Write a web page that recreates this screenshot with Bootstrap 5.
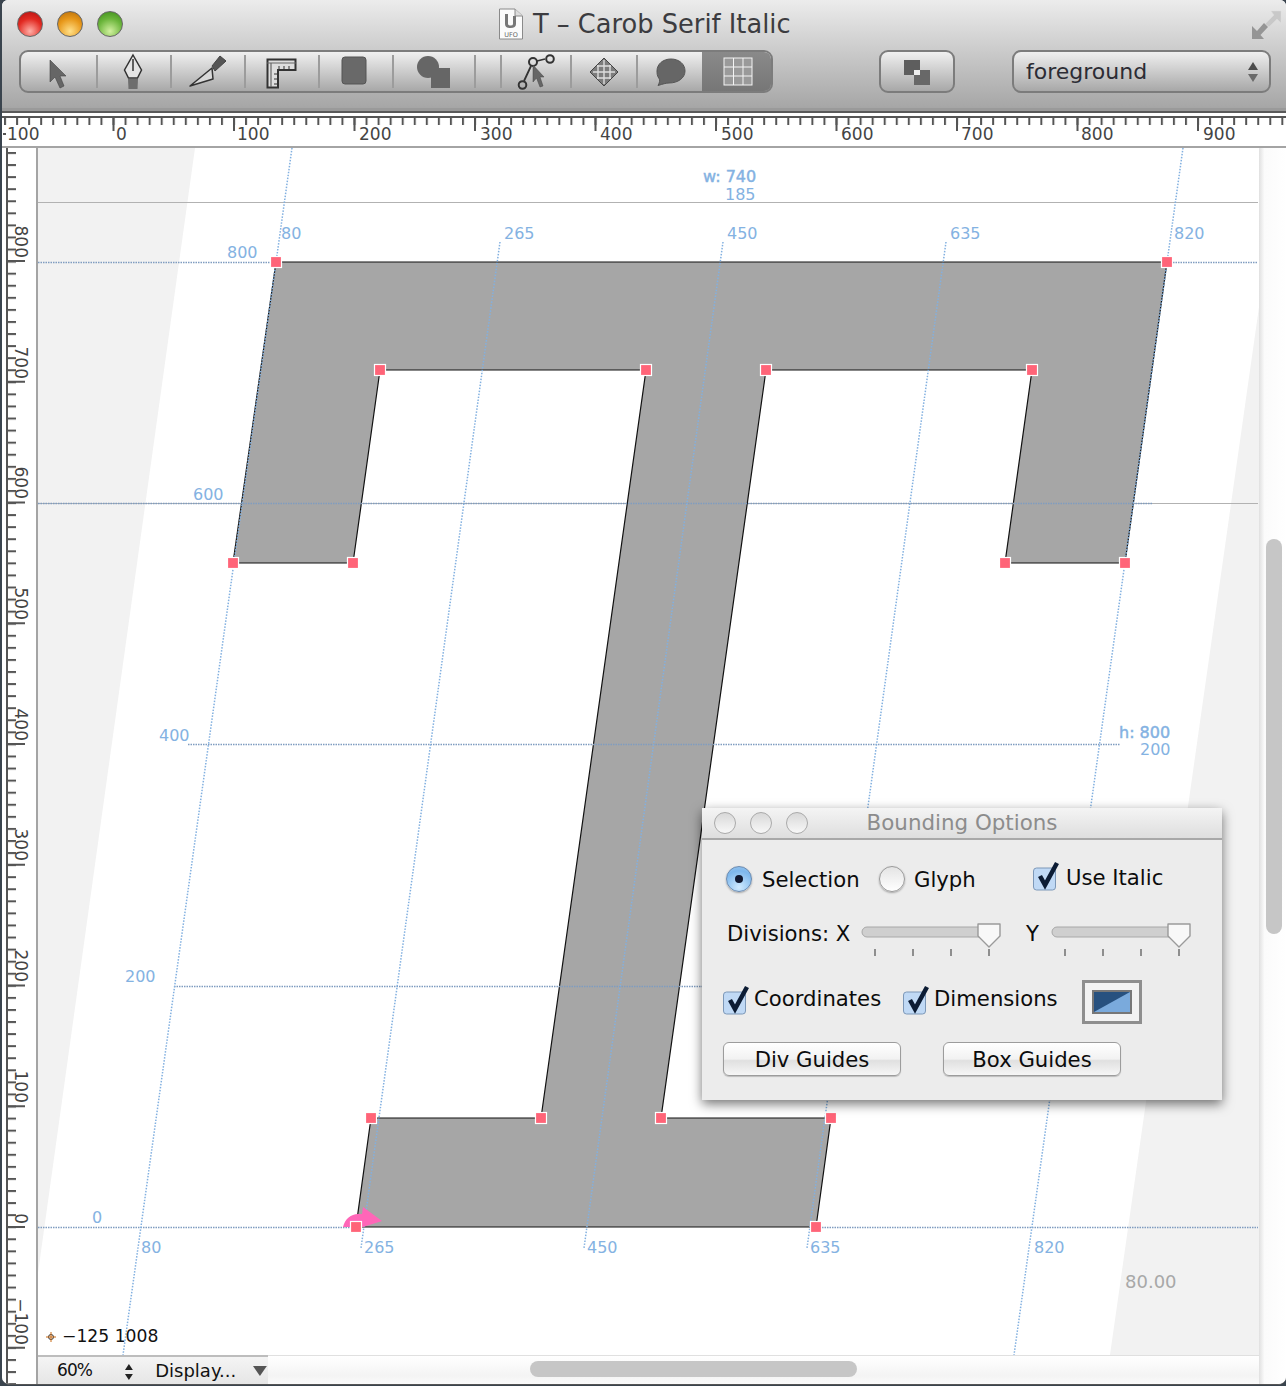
<!doctype html>
<html lang="en">
<head>
<meta charset="utf-8">
<title>T - Carob Serif Italic</title>
<link href="https://cdn.jsdelivr.net/npm/bootstrap@5.3.0/dist/css/bootstrap.min.css" rel="stylesheet">
<style>
html,body{margin:0;height:1386px;overflow:hidden;background:#3a444e;font-family:"DejaVu Sans",sans-serif}
.win{width:1284px;height:1385px;margin-left:2px;background:#fff;border-radius:6px 6px 8px 8px;overflow:hidden;border-bottom:1px solid #555;position:relative}
.chrome{height:113px;background:linear-gradient(#ececec,#a4a4a4);border-bottom:2px solid #5a5a5a;box-shadow:inset 0 -3px 0 #9a9a9a}
.titlerow{height:50px;position:relative}
.lights{left:15px;top:11px;gap:14px;position:absolute}
.light{width:26px;height:26px;border-radius:50%;border:1px solid #666}
.l-r{background:radial-gradient(circle at 50% 80%,#ffb0a8,#e22a22 55%,#b01010)}
.l-y{background:radial-gradient(circle at 50% 80%,#ffe08a,#e8981a 55%,#b46a08)}
.l-g{background:radial-gradient(circle at 50% 80%,#d2f0a0,#6cb63c 55%,#3a8a18)}
.wtitle{position:absolute;left:531px;top:7px;font-size:25.7px;line-height:34px;color:#3c3c40;white-space:nowrap}
.docicon{position:absolute;left:496px;top:8px}
.expandicon{position:absolute;left:1248px;top:10px}
.toolrow{padding-left:17px;gap:0;height:43px;align-items:stretch}
.seg{width:754px;height:43px;border:2px solid #7c7c7c;border-radius:9px;background:linear-gradient(#f0f0f0,#a8a8a8);overflow:hidden;align-items:center}
.seg .btn{padding:0;border:0;border-radius:0;height:39px;display:block;line-height:0;background:transparent;flex:none}
.seg .btn.active{background:linear-gradient(#8a8a8a,#767676)}
.tsep{display:block;width:2px;height:33px;background:#9c9c9c;flex:none}
.t75{width:75px}.t72{width:72px}.t80{width:80px}.t24{width:24px}.t68{width:68px}.t64{width:64px}.t69{width:69px}
.minibtn{margin-left:106px;width:76px;height:43px;padding:0;border:2px solid #7c7c7c;border-radius:9px;background:linear-gradient(#f0f0f0,#a8a8a8);line-height:0}
.layersel{margin-left:57px;width:259px;height:43px;border:2px solid #7c7c7c;border-radius:9px;background:linear-gradient(#efefef,#a8a8a8);padding:0 10px 0 12px;font-size:22px;color:#2c2c34;align-items:center;justify-content:space-between}
.hruler{height:35px;background:#fff;border-bottom:2px solid #a4a4a4;line-height:0}
.mainrow{height:1236px}
.vruler{width:36px;background:#fff;border-right:2px solid #a4a4a4;flex:none;line-height:0}
.canvascol{width:1221px;flex:none;position:relative;background:#fff}
.gsvg{display:block}
.rtxt{font-family:"DejaVu Sans",sans-serif;font-size:17px;fill:#444}
.gl{font-family:"DejaVu Sans",sans-serif;font-size:16px;fill:#84b2e2}
.gb{stroke:#84b2e2;stroke-width:.45}
.guide{stroke:#82b0e0;stroke-width:1.5;stroke-dasharray:1.5 1.5;fill:none}
.gh{stroke:#7f9cc0;stroke-width:1.5;stroke-dasharray:1.5 1;fill:none}
.metric{stroke:#b2b2b2;stroke-width:1.2}
.pt{fill:#ff6478;stroke:#fff;stroke-width:1.2}
.statusbar{height:29px;background:linear-gradient(#fff,#f4f4f4 70%,#fafafa);border-top:1px solid #e0e0e0;position:relative}
.statusleft{width:230px;background:linear-gradient(#f4f4f4,#e6e6e6);border-top:2px solid #bdbdbd;margin-top:-1px;font-size:18px;color:#111;align-items:center;position:relative}
.zoomv{margin-left:19px;width:60px;font-size:17px;letter-spacing:-.9px}
.dispv{margin-left:12px}
.stepper{width:24px;margin-left:3px}
.hthumb{position:absolute;left:492px;top:5px;width:327px;height:16px;background:#c6c6c6;border-radius:8px}
.scrollcol{width:27px;flex:none;background:linear-gradient(90deg,#e0e0e0,#fbfbfb 20%,#fff);position:relative}
.vthumb{position:absolute;left:7px;top:391px;width:16px;height:395px;background:#c6c6c6;border-radius:8px}
.boundpanel{position:absolute;left:664px;top:660px;width:520px;height:292px;background:#ececec;box-shadow:0 4px 12px rgba(0,0,0,.55);border-radius:3px 3px 0 0;font-size:21.2px;color:#0c0c0c}
.ptitle{height:32px;background:linear-gradient(#f4f4f4,#dedede);border-bottom:2px solid #a8a8a8;position:relative;text-align:center;font-size:21.4px;line-height:30px;color:#8c8c8c}
.pdots{position:absolute;left:12px;top:4px;gap:14px}
.pdot{width:22px;height:22px;border-radius:50%;border:1px solid #aaa;background:linear-gradient(#d8d8d8,#f8f8f8)}
.prow{white-space:nowrap}
.r1{height:30px;margin-top:24px;padding-left:24px;align-items:center}
.r2{height:38px;margin-top:28px;padding-left:25px;align-items:flex-start}
.r3{height:44px;margin-top:20px;padding-left:21px;align-items:center}
.r4{margin-top:18px;padding-left:21px;gap:42px}
.rad{width:26px;height:26px;border-radius:50%;border:1px solid #9a9a9a;background:linear-gradient(#e4e4e4,#fff);box-shadow:0 1px 2px rgba(0,0,0,.3);flex:none;position:relative}
.rad.on{background:radial-gradient(circle at 50% 85%,#cfeaff,#7db7ec 70%,#9cc6ee);border-color:#6a8ab0}
.rad.on::after{content:"";position:absolute;left:8px;top:8px;width:8px;height:8px;border-radius:50%;background:#101830}
.rl-sel{margin-left:10px;width:117px;padding-top:1px}
.rl-gly{margin-left:9px;width:119px;padding-top:1px}
.rl-ita{margin-left:7px;margin-top:-3px}
.cbx{width:26px;height:30px;flex:none;overflow:visible}
.cbx-up{margin-top:-6px}
.cbx-r3{margin-top:-4px}
.rl-coo{margin-left:5px;width:149px;margin-top:-6px}
.rl-dim{margin-left:5px;width:148px;margin-top:-6px}
.dl-x{width:134px;line-height:24px}
.dl-y{margin-left:25px;width:25px;line-height:24px}
.pbtn{width:178px;height:34px;padding:1px 0 0;font-size:21.2px;line-height:30px;color:#0c0c0c;border:1px solid #9c9c9c;border-radius:6px;background:linear-gradient(#fff,#f2f2f2 50%,#e0e0e0 55%,#f6f6f6);box-shadow:0 1px 1px rgba(0,0,0,.2)}
.swatch{width:60px;height:44px;border:3px solid #8e8e8e;background:#f2f2f2;line-height:0;display:flex;align-items:center;justify-content:center;flex:none}
</style>
</head>
<body>
<div class="win">
  <header class="chrome">
    <div class="titlerow">
      <div class="lights d-flex"><span class="light l-r"></span><span class="light l-y"></span><span class="light l-g"></span></div>
      <svg class="docicon" width="26" height="32" viewBox="0 0 26 32"><path d="M1.500 1H17L24.500 8V31H1.500Z" fill="#fbfbfb" stroke="#8a8a8a"/><path d="M17 1V8H24.500" fill="#ddd" stroke="#8a8a8a"/><path d="M7 6V16Q7 20 12.500 20T18 16V8H15V16Q15 17.500 12.500 17.500T10 16V6Z" fill="#777"/><text x="13" y="28.500" font-size="6.500" text-anchor="middle" fill="#666" font-family="DejaVu Sans">UFO</text></svg>
      <div class="wtitle">T – Carob Serif Italic</div>
      <svg class="expandicon" width="32" height="30" viewBox="0 0 32 30"><path d="M31 1H21L24 5L15 14L19 17L27 9L31 13Z" fill="#c8c8c8" stroke="#ddd" stroke-width=".5"/><path d="M2 29H14L10.500 25L18 17L14 13L7 21L2 16Z" fill="#959595"/></svg>
    </div>
    <div class="toolrow d-flex">
      <div class="seg d-flex">
        <button type="button" class="btn t75" aria-label="Pointer"><svg width="75" height="39" viewBox="21 52 75 39"><path d="M50 60V82L55 77L60 88L64 86L60 76L66 76Z" fill="#666" stroke="#444" stroke-width=".6"/></svg></button><i class="tsep"></i>
        <button type="button" class="btn t72" aria-label="Pen"><svg width="72" height="39" viewBox="98 52 72 39"><path d="M133 55L141.500 70L137.500 78H128.500L124.500 70Z" fill="#e4e4e4" stroke="#333" stroke-width="1.500"/><path d="M133 59V71" stroke="#333" stroke-width="1.500"/><path d="M128 79H138L137.500 89H128.500Z" fill="#6e6e6e"/></svg></button><i class="tsep"></i>
        <button type="button" class="btn t72" aria-label="Knife"><svg width="72" height="39" viewBox="172 52 72 39"><path d="M190 86L212 68L213 79Z" fill="#d8d8d8" stroke="#333" stroke-width="1.500" stroke-linejoin="round"/><path d="M212 66L220 56L226 61L215 71Z" fill="#555" stroke="#444"/></svg></button><i class="tsep"></i>
        <button type="button" class="btn t72" aria-label="Measure"><svg width="72" height="39" viewBox="246 52 72 39"><path d="M267.500 59.500H295.500V70H278V87.500H267.500Z" fill="#dedede" stroke="#333" stroke-width="2"/><path d="M267 63H296M271 63V87" stroke="#666" stroke-width="1.200"/><path d="M279 66V70M284 66V70M289 66V70M274 74H278M274 79H278M274 84H278" stroke="#333"/></svg></button><i class="tsep"></i>
        <button type="button" class="btn t72" aria-label="Rectangle"><svg width="72" height="39" viewBox="320 52 72 39"><rect x="342" y="57" width="24" height="27" rx="3" fill="#696969" stroke="#555"/></svg></button><i class="tsep"></i>
        <button type="button" class="btn t80" aria-label="Shapes"><svg width="80" height="39" viewBox="394 52 80 39"><circle cx="428" cy="67" r="11" fill="#666"/><rect x="431" y="68" width="19" height="20" fill="#666"/></svg></button><i class="tsep"></i>
        <button type="button" class="btn t24" aria-label="Blank"></button><i class="tsep"></i>
        <button type="button" class="btn t68" aria-label="Nodes"><svg width="68" height="39" viewBox="502 52 68 39"><path d="M537 61L545 59M531 66L524 81" stroke="#333" stroke-width="1.800"/><g fill="none" stroke="#333" stroke-width="2"><circle cx="533" cy="62" r="4"/><circle cx="550" cy="59" r="3.800"/><circle cx="522.500" cy="85" r="3.800"/></g><path d="M533 65V82L536.500 78L540 87L543 86L540 77L544 77Z" fill="#666" stroke="#444" stroke-width=".5"/></svg></button><i class="tsep"></i>
        <button type="button" class="btn t64" aria-label="Transform"><svg width="64" height="39" viewBox="572 52 64 39"><path d="M604 58L618 72L604 86L590 72Z" fill="#7c7c7c" stroke="#444"/><path d="M597 66H611M593 72H615M597 78H611M598 65V79M604 60V84M610 65V79" stroke="#ddd" stroke-width="1.400"/></svg></button><i class="tsep"></i>
        <button type="button" class="btn t64" aria-label="Comment"><svg width="64" height="39" viewBox="638 52 64 39"><path d="M671 59C679 59 685 64 685 71C685 78 678 83 669 83C666 83 663 84 658 85.500C660 82 660 80 659 78.500C657 76 657 73 657 71C657 64 663 59 671 59Z" fill="#666" stroke="#555"/></svg></button>
        <button type="button" class="btn active t69" aria-label="Grid"><svg width="69" height="39" viewBox="702 52 69 39"><rect x="724" y="58" width="28" height="27" fill="#9a9a9a" stroke="#f4f4f4"/><path d="M733.500 58V85M743 58V85M724 67H752M724 76H752" stroke="#f4f4f4"/></svg></button>
      </div>
      <button type="button" class="minibtn btn" aria-label="Layers"><svg width="72" height="39" viewBox="881 52 72 39"><rect x="904" y="60" width="16" height="15" fill="#5e5e5e"/><rect x="914" y="70" width="16" height="15" fill="#686868"/><rect x="914" y="70" width="6" height="5" fill="#eee"/></svg></button>
      <div class="layersel d-flex"><span>foreground</span><svg width="12" height="24" viewBox="0 0 12 24"><path d="M6 2L11 10H1Z" fill="#4c4c4c"/><path d="M6 22L1 14H11Z" fill="#6a6a6a"/></svg></div>
    </div>
  </header>

  <div class="hruler">
    <svg width="1284" height="33" viewBox="2 113 1284 33">
      <defs><pattern id="tickh" patternUnits="userSpaceOnUse" x="112.500" y="113" width="12.050" height="33"><rect x="0" y="3" width="2" height="12" fill="#555"/></pattern></defs>
      <rect x="2" y="116" width="1284" height="9" fill="url(#tickh)"/>
      <rect x="2" y="116" width="1284" height="2" fill="#555"/>
      <path d="M113.500 118V131M234 118V131M354.500 118V131M475 118V131M595.500 118V131M716 118V131M836.500 118V131M957 118V131M1077.500 118V131M1198 118V131M3 134H6" stroke="#555" stroke-width="2"/>
      <g class="rtxt"><text x="7" y="140">100</text><text x="116" y="140">0</text><text x="237" y="140">100</text><text x="359" y="140">200</text><text x="480" y="140">300</text><text x="600" y="140">400</text><text x="721" y="140">500</text><text x="841" y="140">600</text><text x="961" y="140">700</text><text x="1081" y="140">800</text><text x="1203" y="140">900</text></g>
    </svg>
  </div>

  <div class="mainrow d-flex">
    <div class="vruler">
      <svg width="34" height="1236" viewBox="2 148 34 1236">
        <defs><pattern id="tickv" patternUnits="userSpaceOnUse" x="0" y="152" width="36" height="12.070"><rect x="6" y="0" width="10" height="2" fill="#555"/></pattern></defs>
        <rect x="2" y="148" width="34" height="1236" fill="url(#tickv)"/>
        <rect x="6" y="148" width="2" height="1236" fill="#555"/>
        <path d="M8 261H25M8 381.800H25M8 502.500H25M8 623.300H25M8 744H25M8 864.800H25M8 985.500H25M8 1106.300H25M8 1227H25M8 1347.800H25" stroke="#555" stroke-width="2"/>
        <g class="rtxt"><text transform="translate(15 258) rotate(90)" text-anchor="end">800</text><text transform="translate(15 379) rotate(90)" text-anchor="end">700</text><text transform="translate(15 499) rotate(90)" text-anchor="end">600</text><text transform="translate(15 620) rotate(90)" text-anchor="end">500</text><text transform="translate(15 741) rotate(90)" text-anchor="end">400</text><text transform="translate(15 861) rotate(90)" text-anchor="end">300</text><text transform="translate(15 982) rotate(90)" text-anchor="end">200</text><text transform="translate(15 1103) rotate(90)" text-anchor="end">100</text><text transform="translate(15 1224) rotate(90)" text-anchor="end">0</text><text transform="translate(15 1345) rotate(90)" text-anchor="end">−100</text></g>
      </svg>
    </div>
    <div class="canvascol">
      <svg class="gsvg" width="1221" height="1207" viewBox="38 148 1221 1207">
        <rect x="38" y="148" width="1221" height="1207" fill="#fff"/>
        <path d="M38 148H195L38 1273Z" fill="#f2f2f2"/>
        <path d="M1260 300V1355H1110Z" fill="#f2f2f2"/>
        <path class="metric" d="M38 202.500H1258M38 503.500H1258"/>
        <path d="M276 262H1167L1125 563H1005L1032 370H766L661 1118H831L816 1227H356L371 1118H541L646 370H380L353 563H233Z" fill="#a6a6a6" stroke="#111" stroke-width="1.200"/>
        <path class="gh" d="M38 262.500H270M1173 262.500H1258M38 503.500H1153M188 744.500H1120M174 986.500H702M38 1227.500H350M822 1227.500H1258"/>
        <path class="guide" d="M292 148L123 1355M500 242L361 1248M723 242L584 1248M946 242L807 1248M1183 148L1014 1355"/>
        <path d="M343 1227C345 1219 351 1214 358 1214H362L363 1207L382 1221L363 1227Z" fill="#ff66b8"/>
        <g>
          <rect class="pt" x="270.500" y="256.500" width="11" height="11"/><rect class="pt" x="1161.500" y="256.500" width="11" height="11"/><rect class="pt" x="1119.500" y="557.500" width="11" height="11"/><rect class="pt" x="999.500" y="557.500" width="11" height="11"/><rect class="pt" x="1026.500" y="364.500" width="11" height="11"/><rect class="pt" x="760.500" y="364.500" width="11" height="11"/><rect class="pt" x="655.500" y="1112.500" width="11" height="11"/><rect class="pt" x="825.500" y="1112.500" width="11" height="11"/><rect class="pt" x="810.500" y="1221.500" width="11" height="11"/><rect class="pt" x="350.500" y="1221.500" width="11" height="11"/><rect class="pt" x="365.500" y="1112.500" width="11" height="11"/><rect class="pt" x="535.500" y="1112.500" width="11" height="11"/><rect class="pt" x="640.500" y="364.500" width="11" height="11"/><rect class="pt" x="374.500" y="364.500" width="11" height="11"/><rect class="pt" x="347.500" y="557.500" width="11" height="11"/><rect class="pt" x="227.500" y="557.500" width="11" height="11"/>
        </g>
        <g class="gl">
          <text class="gb" x="703" y="182">w: 740</text><text x="725" y="200">185</text>
          <text x="281" y="239">80</text><text x="504" y="239">265</text><text x="727" y="239">450</text><text x="950" y="239">635</text><text x="1174" y="239">820</text>
          <text x="227" y="258">800</text><text x="193" y="500">600</text><text x="159" y="741">400</text><text x="125" y="982">200</text><text x="92" y="1223">0</text>
          <text class="gb" x="1119" y="738">h: 800</text><text x="1140" y="755">200</text>
          <text x="141" y="1253">80</text><text x="364" y="1253">265</text><text x="587" y="1253">450</text><text x="810" y="1253">635</text><text x="1034" y="1253">820</text>
        </g>
        <text x="1125" y="1288" font-family="DejaVu Sans" font-size="18" fill="#a8a8a8">80.00</text>
        <g fill="none" stroke="#c86a14"><circle cx="51" cy="1337" r="2.500" stroke="#333"/><path d="M51 1332V1342M46 1337H56"/></g>
        <text x="62" y="1342" font-family="DejaVu Sans" font-size="17.200" fill="#111">−125 1008</text>
      </svg>
      <div class="statusbar d-flex">
        <div class="statusleft d-flex">
          <span class="zoomv">60%</span>
          <svg class="stepper" width="24" height="22" viewBox="0 0 24 22"><path d="M10 4L14 10H6Z" fill="#222"/><path d="M10 20L6 14H14Z" fill="#222"/></svg>
          <span class="dispv">Display...</span>
          <svg class="ms-3" width="16" height="12" viewBox="0 0 16 12"><path d="M1 1H15L8 11Z" fill="#555"/></svg>
        </div>
        <div class="hthumb"></div>
      </div>

      <section class="boundpanel">
        <div class="ptitle">Bounding Options<div class="pdots d-flex"><span class="pdot"></span><span class="pdot"></span><span class="pdot"></span></div></div>
        <div class="prow r1 d-flex">
          <span class="rad on"></span><span class="rl-sel">Selection</span>
          <span class="rad"></span><span class="rl-gly">Glyph</span>
          <svg class="cbx cbx-up" viewBox="0 0 26 30"><rect x=".5" y="7" width="22" height="22" rx="3" fill="#c0d9f5" stroke="#7d98b8"/><path d="M7 15L12 24L24 2" fill="none" stroke="#0c1c34" stroke-width="4.500"/></svg><span class="rl-ita">Use Italic</span>
        </div>
        <div class="prow r2 d-flex">
          <span class="dl-x">Divisions: X</span>
          <svg width="140" height="38" viewBox="0 0 140 38"><rect x="1" y="5" width="130" height="10" rx="5" fill="#cfcfcf" stroke="#a8a8a8"/><path d="M14 27V34M52 27V34M90 27V34M128 27V34" stroke="#777" stroke-width="1.600"/><path d="M117 2H139V14L128 25L117 14Z" fill="#f8f8f8" stroke="#9a9a9a" stroke-width="1.400" stroke-linejoin="round"/></svg>
          <span class="dl-y">Y</span>
          <svg width="140" height="38" viewBox="0 0 140 38"><rect x="1" y="5" width="130" height="10" rx="5" fill="#cfcfcf" stroke="#a8a8a8"/><path d="M14 27V34M52 27V34M90 27V34M128 27V34" stroke="#777" stroke-width="1.600"/><path d="M117 2H139V14L128 25L117 14Z" fill="#f8f8f8" stroke="#9a9a9a" stroke-width="1.400" stroke-linejoin="round"/></svg>
        </div>
        <div class="prow r3 d-flex">
          <svg class="cbx cbx-r3" viewBox="0 0 26 30"><rect x=".5" y="7" width="22" height="22" rx="3" fill="#c0d9f5" stroke="#7d98b8"/><path d="M7 15L12 24L24 2" fill="none" stroke="#0c1c34" stroke-width="4.500"/></svg><span class="rl-coo">Coordinates</span>
          <svg class="cbx cbx-r3" viewBox="0 0 26 30"><rect x=".5" y="7" width="22" height="22" rx="3" fill="#c0d9f5" stroke="#7d98b8"/><path d="M7 15L12 24L24 2" fill="none" stroke="#0c1c34" stroke-width="4.500"/></svg><span class="rl-dim">Dimensions</span>
          <div class="swatch"><svg width="40" height="24" viewBox="0 0 40 24"><rect x="1" y="1" width="38" height="22" fill="#7aaadc" stroke="#777" stroke-width="2"/><path d="M2 2H38L2 22Z" fill="#27517f"/></svg></div>
        </div>
        <div class="r4 d-flex">
          <button type="button" class="btn pbtn">Div Guides</button>
          <button type="button" class="btn pbtn">Box Guides</button>
        </div>
      </section>
    </div>
    <div class="scrollcol"><div class="vthumb"></div></div>
  </div>
</div>
<script src="https://cdn.jsdelivr.net/npm/bootstrap@5.3.0/dist/js/bootstrap.bundle.min.js"></script>
</body>
</html>
